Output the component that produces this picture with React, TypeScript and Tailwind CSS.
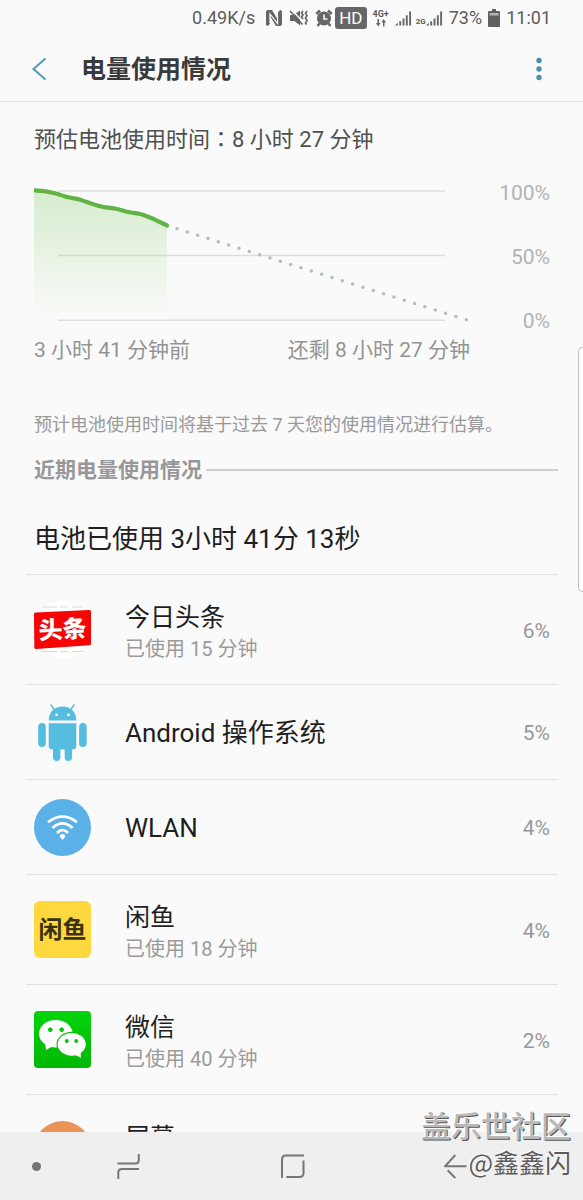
import type { ReactNode } from "react";

type Usage = { name: string; detail?: string; percent: string; icon: ReactNode; tall: boolean; latin?: boolean };

const iconClass = "size-[57px] shrink-0";

const ToutiaoIcon = () => (
  <svg viewBox="0 0 57 57" className={iconClass} aria-hidden="true">
    <circle cx="28.5" cy="28.5" r="28.5" fill="#fff" />
    <path d="M8 6h15M26 6h8M38 6h11M7 50.500h16M26 50.500h9M38 50.500h11" stroke="#d9d9de" strokeWidth="1.2" />
    <path d="M1.500 11.500 55.500 9Q57 9 57 10.500V42.500Q57 44 55.500 44.200L2 48Q.3 48 .3 46.500L0 13Q0 11.600 1.500 11.500Z" fill="#f70404" />
    <text x="28.500" y="37" textAnchor="middle" fontSize="24" fontWeight="900" fill="#fff" transform="rotate(-3 28.5 28.5)">头条</text>
  </svg>
);

const AndroidIcon = () => (
  <svg viewBox="0 0 57 57" className={iconClass} fill="#56bde1" aria-hidden="true">
    <path d="m17 1 4 5.500M40 1l-4 5.500" stroke="#56bde1" strokeWidth="1.500" strokeLinecap="round" />
    <path d="M14.700 16.500C14.700 8 20.500 2.500 28.500 2.500S42.300 8 42.300 16.500Z" />
    <path d="M14.700 19.200H42.300V42Q42.300 45.500 38.800 45.500H18.200Q14.700 45.500 14.700 42Z" />
    <rect x="4.200" y="19" width="7.600" height="24" rx="3.800" />
    <rect x="45.100" y="19" width="7.600" height="24" rx="3.800" />
    <rect x="19" y="38" width="7.400" height="19" rx="3.700" />
    <rect x="30.700" y="38" width="7.400" height="19" rx="3.700" />
    <circle cx="22.600" cy="10.800" r="1.400" fill="#fff" />
    <circle cx="34.400" cy="10.800" r="1.400" fill="#fff" />
  </svg>
);

const WlanIcon = () => (
  <svg viewBox="0 0 57 57" className={iconClass} aria-hidden="true">
    <circle cx="28.500" cy="28.500" r="28.500" fill="#5ab1e8" />
    <g fill="none" stroke="#fff" strokeWidth="2.700">
      <path d="M14 23.300Q28.500 12 43 23.300" />
      <path d="M18.500 29Q28.500 19.700 38.500 29" />
      <path d="M23 34Q28.500 28 34 34" />
    </g>
    <path d="M25.800 37.800a2.700 2.700 0 0 1 5.400 0L28.500 41Z" fill="#fff" />
  </svg>
);

const XianyuIcon = () => (
  <svg viewBox="0 0 57 57" className={iconClass} aria-hidden="true">
    <rect width="57" height="57" rx="6" fill="#fdd93f" />
    <text x="28.500" y="37" textAnchor="middle" fontSize="24" fontWeight="700" fill="#3a3212">闲鱼</text>
  </svg>
);

const WechatIcon = () => (
  <svg viewBox="0 0 57 57" className={iconClass} aria-hidden="true">
    <defs>
      <linearGradient id="wechat" x1="0" y1="0" x2="0" y2="1">
        <stop offset="0" stopColor="#05d40b" />
        <stop offset="1" stopColor="#02b705" />
      </linearGradient>
    </defs>
    <rect width="57" height="57" rx="4" fill="url(#wechat)" />
    <path d="M11 31 12 39 19 35Z" fill="#fff" />
    <ellipse cx="21.800" cy="22.700" rx="16.800" ry="13.700" fill="#fff" />
    <ellipse cx="37.700" cy="33.300" rx="15.200" ry="12.500" fill="#04c308" />
    <path d="M40 43.500 47 46.800 46.500 40Z" fill="#fff" />
    <ellipse cx="37.700" cy="33.300" rx="14" ry="11.400" fill="#fff" />
    <g fill="#04c308">
      <circle cx="16.300" cy="18.700" r="2.300" />
      <circle cx="27.700" cy="18.700" r="2.300" />
      <circle cx="32.800" cy="30" r="1.900" />
      <circle cx="42.200" cy="30" r="1.900" />
    </g>
  </svg>
);

const ScreenIcon = () => (
  <svg viewBox="0 0 57 57" className={iconClass} aria-hidden="true">
    <circle cx="28.500" cy="28.500" r="28.500" fill="#eb9458" />
  </svg>
);

const usages: Usage[] = [
  { name: "今日头条", detail: "已使用 15 分钟", percent: "6%", icon: <ToutiaoIcon />, tall: true },
  { name: "Android 操作系统", percent: "5%", icon: <AndroidIcon />, tall: false, latin: true },
  { name: "WLAN", percent: "4%", icon: <WlanIcon />, tall: false, latin: true },
  { name: "闲鱼", detail: "已使用 18 分钟", percent: "4%", icon: <XianyuIcon />, tall: true },
  { name: "微信", detail: "已使用 40 分钟", percent: "2%", icon: <WechatIcon />, tall: true },
  { name: "屏幕", percent: "", icon: <ScreenIcon />, tall: true },
];

const Signal = () => (
  <svg viewBox="0 0 18 18" className="h-[18px] w-[17px]" fill="#666" aria-hidden="true">
    <path d="M0 17 3 14V17ZM4.500 12.500H6.500V17H4.500ZM8 9.500H10V17H8ZM11.500 6H13.500V17H11.500ZM15 2H17V17H15Z" />
  </svg>
);

function StatusBar() {
  return (
    <div className="flex h-9 shrink-0 items-center justify-end gap-[6px] pr-8 text-[18px] leading-6 text-[#5c5c5c]">
      <span className="mr-1">0.49K/s</span>
      <svg viewBox="0 0 18 18" className="size-[18px]" aria-label="NFC">
        <path d="M3 1H7L13 11V3.500L15 1Q17 1 17 3V15Q17 17 15 17H11L5 7V14.500L3 17Q1 17 1 15V3Q1 1 3 1Z" fill="#666" />
        <path d="M5 14V5L12.500 14.500V4" fill="none" stroke="#fafafa" strokeWidth="1.200" />
      </svg>
      <svg viewBox="0 0 20 18" className="h-[18px] w-5" aria-label="静音振动">
        <path d="M1 6H4.500L11 1.500V16.500L5.500 12H1Z" fill="#666" />
        <path d="m2.500 .5 12 13" stroke="#fafafa" strokeWidth="1.500" />
        <path d="m1 2 12.500 13.500M14 2l-1.500 2 1.500 2-1.500 2 1.500 2M18 2l-1.500 2.300 1.500 2.400-1.500 2.400 1.500 2.400-1.500 2.400 1 1.600" fill="none" stroke="#666" strokeWidth="1.700" />
      </svg>
      <svg viewBox="0 0 18 18" className="size-[18px]" aria-label="闹钟">
        <circle cx="9" cy="9.500" r="7" fill="#666" />
        <path d="M1.300 5 5 1.500M16.700 5 13 1.500M4.500 14.500 2.500 17M13.500 14.500l2 2.500" stroke="#666" strokeWidth="2.500" />
        <path d="M9 5.500v4.500h3.500" fill="none" stroke="#fafafa" strokeWidth="1.600" />
      </svg>
      <span className="-ml-1 rounded-[3px] bg-[#666] px-1 text-[17px] leading-[22px] text-white">HD</span>
      <span className="flex flex-col items-center text-[9px] leading-[9px] font-bold">
        4G+
        <svg viewBox="0 0 12 8" className="h-2 w-3" fill="#666" aria-hidden="true">
          <path d="M2.500 0H4V4H5.500L3.200 7.500 1 4H2.500ZM8 7.500H9.500V3.500H11L8.700 0 6.500 3.500H8Z" />
        </svg>
      </span>
      <Signal />
      <span className="flex items-end">
        <span className="-ml-[2px] text-[8px] leading-[10px] font-bold">2G</span>
        <Signal />
      </span>
      <span>73%</span>
      <svg viewBox="0 0 12 18" className="h-[18px] w-3" aria-label="电池">
        <path d="M4 0H8V2H11Q12 2 12 3V17Q12 18 11 18H1Q0 18 0 17V3Q0 2 1 2H4Z" fill="#606060" />
        <path d="M1.500 4H10.500V6.500H1.500Z" fill="#b5b5b5" />
      </svg>
      <span>11:01</span>
    </div>
  );
}

function Header() {
  return (
    <header className="flex h-[66px] shrink-0 items-center border-b border-[#e2e2e2] pr-8 pl-7">
      <button type="button" aria-label="返回" className="flex h-10 w-[53px] items-center">
        <svg viewBox="0 0 22 24" className="h-6 w-[22px]" fill="none" stroke="#4f9ab5" strokeWidth="2" aria-hidden="true">
          <path d="M17.500 1.500 5.500 12 17.500 22.500" />
        </svg>
      </button>
      <h1 className="flex-1 pt-[3px] text-[25px] leading-9 font-bold text-[#3a3a3a]">电量使用情况</h1>
      <button type="button" aria-label="更多选项" className="flex h-10 w-6 items-center justify-center">
        <svg viewBox="0 0 6 24" className="h-6 w-[6px]" fill="#4692ad" aria-hidden="true">
          <circle cx="3" cy="3.500" r="2.700" />
          <circle cx="3" cy="12" r="2.700" />
          <circle cx="3" cy="20.500" r="2.700" />
        </svg>
      </button>
    </header>
  );
}

function BatteryChart() {
  const curve = "M34 190.300C42 190.500 48 191.500 54 193S63 196 68 197.300 75 198.300 80 199.700 96 205.500 102.200 206.700 112 208 117 209 125 211.300 130 212.300 137 213 141.300 214.300 150 217.500 154.300 219.300L167 225.500";
  return (
    <div className="mt-6 grid grid-cols-[1fr_80px]">
      <svg viewBox="34 179 436 150" className="w-full" role="img" aria-label="电池电量曲线">
        <defs>
          <linearGradient id="level" x1="0" y1="0" x2="0" y2="1">
            <stop offset="0" stopColor="#6cc24a" stopOpacity="0.25" />
            <stop offset="1" stopColor="#6cc24a" stopOpacity="0" />
          </linearGradient>
          <clipPath id="plot">
            <rect x="34" y="179" width="436" height="150" />
          </clipPath>
        </defs>
        <path d="M58 191H445M58 255.500H445M58 320.300H445" stroke="#dedede" strokeWidth="1.500" />
        <path d={curve + "V318H34Z"} fill="url(#level)" />
        <path d={curve} fill="none" stroke="#60b446" strokeWidth="4.200" strokeLinecap="round" clipPath="url(#plot)" />
        <path d="M177 228.700 466.500 319.800" stroke="#b1bfc3" strokeWidth="3.600" strokeLinecap="round" strokeDasharray="0 10.830" />
      </svg>
      <div className="flex flex-col justify-between pt-[2px] text-right text-[21px] leading-6 text-[#b3b3b3]">
        <span>100%</span>
        <span>50%</span>
        <span className="-mb-1">0%</span>
      </div>
      <div className="mt-[6px] flex justify-between text-[21px] leading-[30px] text-[#939393]">
        <span>3 小时 41 分钟前</span>
        <span>还剩 8 小时 27 分钟</span>
      </div>
    </div>
  );
}

function UsageRow({ usage }: { usage: Usage }) {
  return (
    <li className={`flex items-center border-t border-[#e2e2e2] px-2 ${usage.tall ? "h-[110px]" : "h-[95px]"}`}>
      {usage.icon}
      <div className={`ml-[34px] flex-1 ${usage.tall ? "pt-[6px]" : "pt-[2px]"}`}>
        <div className={`leading-8 text-[#1f1f1f] ${usage.latin ? "text-[26px]" : "text-[25px]"}`}>{usage.name}</div>
        {usage.tall && <div className="h-[30px] text-[20px] leading-[30px] text-[#9b9b9b]">{usage.detail}</div>}
      </div>
      <span className="pt-[2px] text-[21px] leading-6 text-[#989898]">{usage.percent}</span>
    </li>
  );
}

function NavBar() {
  return (
    <nav className="flex h-[68px] shrink-0 items-center bg-[#efefef] pr-[116px] pl-8">
      <button type="button" aria-label="固定导航栏" className="size-[9px] rounded-full bg-[#757575]" />
      <div className="ml-[76px] flex flex-1 items-center justify-between">
        <button type="button" aria-label="最近任务">
          <svg viewBox="0 0 24 27" className="h-[27px] w-6" fill="none" stroke="#777" strokeWidth="2" aria-hidden="true">
            <path d="M.5 10.500H18Q21.800 10.500 21.800 7V1M22 16H5Q1.300 16 1.300 19.500V26" />
          </svg>
        </button>
        <button type="button" aria-label="主屏幕">
          <svg viewBox="0 0 25 27" className="h-[27px] w-[25px]" fill="none" stroke="#777" strokeWidth="2" aria-hidden="true">
            <path d="M24 2.500H6Q2 2.500 2 6.500V25M23.500 7.500V20Q23.500 24 19.500 24H6.300" />
          </svg>
        </button>
        <button type="button" aria-label="返回上一页">
          <svg viewBox="0 0 23 27" className="h-[27px] w-[23px]" fill="none" stroke="#777" strokeWidth="2" aria-hidden="true">
            <path d="M11.300 2 1 13.300H22.500M3.700 17.300 11.300 25" />
          </svg>
        </button>
      </div>
    </nav>
  );
}

export default function App() {
  return (
    <div lang="zh-CN" className="relative flex h-screen flex-col overflow-hidden bg-[#fafafa] font-['Roboto','Noto_Sans_CJK_SC',sans-serif]">
      <StatusBar />
      <Header />
      <main className="min-h-0 flex-1 overflow-y-auto [scrollbar-width:none]">
        <section className="pt-5 pr-[33px] pl-[34px]">
          <p className="text-[22px] leading-[30px] text-[#505050]">
            预估电池使用时间<span lang="zh-TW" className="font-['Noto_Sans_CJK_TC',sans-serif]">：</span>8 小时 27 分钟
          </p>
          <BatteryChart />
          <p className="mt-[46px] text-[18px] leading-[28px] text-[#999]">预计电池使用时间将基于过去 7 天您的使用情况进行估算。</p>
        </section>
        <section className="pr-[25px] pl-[26px]">
          <div className="mt-4 flex items-center gap-1 pl-2">
            <h2 className="text-[21px] leading-[30px] font-bold text-[#979797]">近期电量使用情况</h2>
            <span className="h-[2px] flex-1 bg-[#d0d0d0]" />
          </div>
          <p className="mt-9 mb-[17px] pl-2 text-[26px] leading-9 text-[#1f1f1f]">电池已使用 3小时 41分 13秒</p>
          <ul>
            {usages.map((usage) => (
              <UsageRow key={usage.name} usage={usage} />
            ))}
          </ul>
        </section>
      </main>
      <NavBar />
      <div className="absolute top-[347px] right-0 h-[245px] w-[5px] rounded-l-[5px] border border-r-0 border-[#bdbdbd] bg-white" />
      <div className="pointer-events-none absolute right-3 bottom-[20px] flex flex-col items-end font-['Noto_Sans_CJK_SC',sans-serif] text-[#b9b9b9] [text-shadow:-1px_-1px_0_#fff,1px_1px_0_#555]">
        <span className="text-[30px] leading-10 font-medium">盖乐世社区</span>
        <span className="text-[26px] leading-9 text-[#5c5c5c] [text-shadow:-1px_-1px_0_#fff]">@鑫鑫闪</span>
      </div>
    </div>
  );
}
